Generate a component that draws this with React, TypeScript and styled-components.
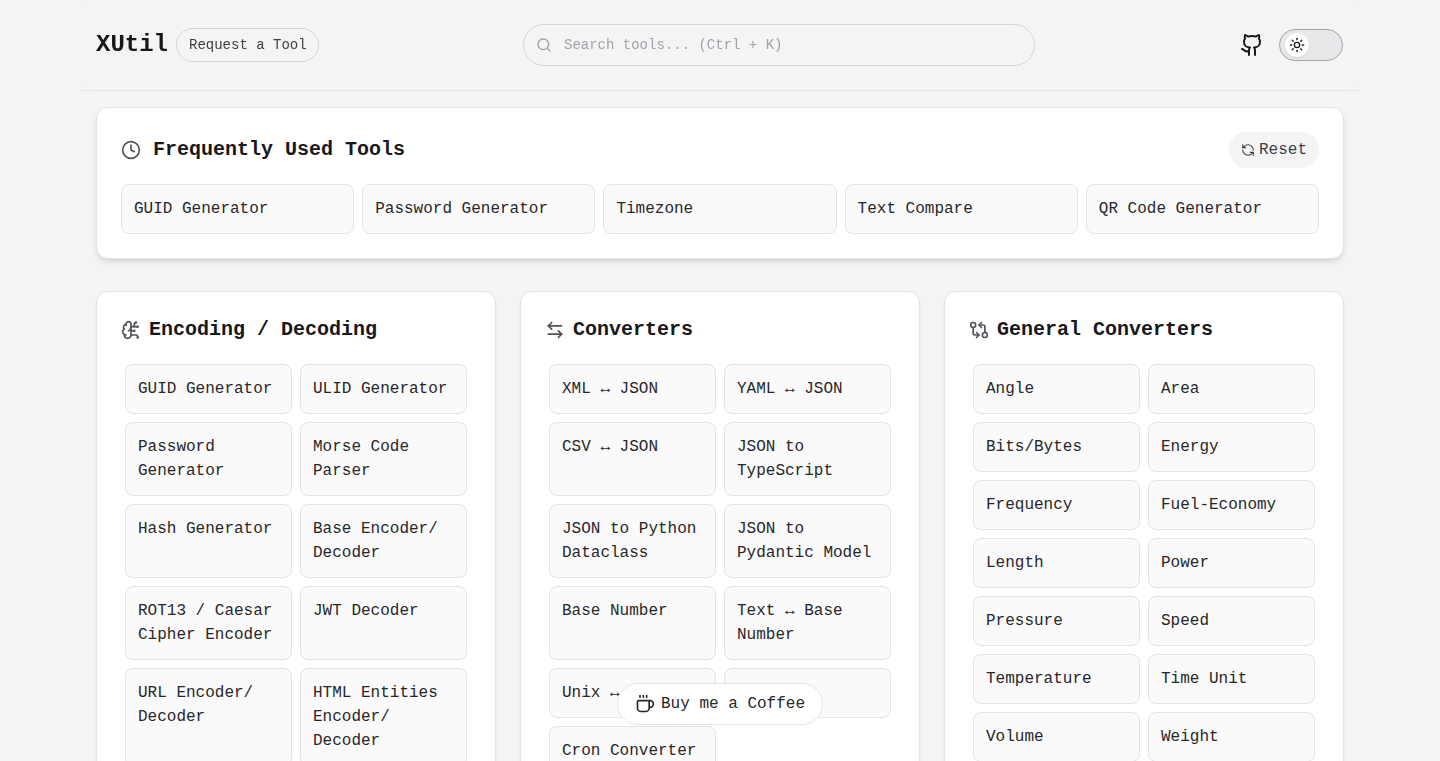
import React from "react";
import styled, { createGlobalStyle } from "styled-components";
import { ArrowLeftRight, BrainCircuit, Clock, Coffee, GitCompareArrows, RefreshCcw, Search, Sun } from "lucide-react";

const Global = createGlobalStyle`
  * { box-sizing: border-box; }
  html, body { margin: 0; padding: 0; height: 100%; overflow: hidden; background: #f4f4f4; }
  body { font-family: "Liberation Mono", monospace; color: #18181b; }
`;

const Page = styled.div`
  width: 1280px;
  margin: 0 auto;
`;

const Header = styled.header`
  height: 91px;
  padding: 0 16px;
  display: flex;
  align-items: center;
  justify-content: space-between;
  border-bottom: 1px solid #e4e4e7;
  backdrop-filter: blur(8px);
`;

const Brand = styled.div`
  display: flex;
  align-items: center;
  gap: 8px;
`;

const Logo = styled.span`
  font-size: 24px;
  font-weight: 700;
  line-height: 32px;
  color: #18181b;
`;

const RequestLink = styled.a`
  width: 143px;
  height: 34px;
  padding: 0 0 0 12px;
  display: flex;
  align-items: center;
  font-size: 14px;
  color: #3f3f46;
  border: 1px solid #d4d4d8;
  border-radius: 17px;
`;

const SearchBox = styled.div`
  width: 512px;
  height: 42px;
  padding: 0 12px;
  display: flex;
  align-items: center;
  gap: 12px;
  font-size: 14px;
  color: #a1a1aa;
  border: 1px solid #d4d4d8;
  border-radius: 21px;
`;

const Actions = styled.div`
  display: flex;
  align-items: center;
  gap: 15px;
  padding: 0 1px;
`;

const Toggle = styled.div`
  width: 64px;
  height: 32px;
  padding-left: 5px;
  display: flex;
  align-items: center;
  background: #e8e8ea;
  border: 1px solid #a1a1aa;
  border-radius: 16px;
`;

const Thumb = styled.div`
  width: 24px;
  height: 24px;
  display: flex;
  align-items: center;
  justify-content: center;
  background: #fff;
  border-radius: 50%;
  box-shadow: 0 1px 2px rgba(0, 0, 0, 0.1);
  color: #18181b;
`;

const Main = styled.main`
  padding: 16px 16px 0;
  display: flex;
  flex-direction: column;
  gap: 32px;
`;

const Card = styled.section<{ $raised?: boolean }>`
  padding: 24px;
  background: #fff;
  border: 1px solid #e4e4e7;
  border-radius: 12px;
  box-shadow: ${(p) =>
    p.$raised
      ? "0 4px 6px -1px rgba(0, 0, 0, 0.1), 0 2px 4px -2px rgba(0, 0, 0, 0.1)"
      : "0 1px 3px rgba(0, 0, 0, 0.05)"};
`;

const CardHead = styled.div`
  display: flex;
  align-items: center;
  justify-content: space-between;
  margin-bottom: 16px;
`;

const Title = styled.h2<{ $gap: number }>`
  margin: 0;
  display: flex;
  align-items: center;
  gap: ${(p) => p.$gap}px;
  font-size: 20px;
  line-height: 28px;
  font-weight: 700;
  color: #18181b;
  svg { color: #52525b; flex: none; }
`;

const ResetButton = styled.button`
  height: 36px;
  padding: 0 12px;
  display: flex;
  align-items: center;
  gap: 4px;
  font-family: inherit;
  font-size: 16px;
  color: #3f3f46;
  background: #f4f4f5;
  border: none;
  border-radius: 18px;
`;

const FrequentGrid = styled.div`
  display: grid;
  grid-template-columns: repeat(5, minmax(0, 1fr));
  gap: 8px;
`;

const Columns = styled.div`
  display: grid;
  grid-template-columns: repeat(3, 400px);
  gap: 24px;
  align-items: start;
`;

const ToolGrid = styled.div`
  padding: 4px;
  display: grid;
  grid-template-columns: repeat(2, 167px);
  gap: 8px;
`;

const Tool = styled.a`
  padding: 12px;
  font-size: 16px;
  line-height: 24px;
  color: #27272a;
  background: #fafafa;
  border: 1px solid #e4e4e7;
  border-radius: 8px;
`;

const CoffeeButton = styled.a`
  position: fixed;
  left: 617px;
  top: 683px;
  width: 206px;
  height: 42px;
  padding-left: 17px;
  display: flex;
  align-items: center;
  gap: 6px;
  font-size: 16px;
  color: #27272a;
  background: #fff;
  border: 1px solid #e4e4e7;
  border-radius: 21px;
  backdrop-filter: blur(8px);
`;

const frequent = ["GUID Generator", "Password Generator", "Timezone", "Text Compare", "QR Code Generator"];

const groups = [
  {
    title: "Encoding / Decoding",
    icon: <BrainCircuit size={20} />,
    tools: ["GUID Generator", "ULID Generator", "Password Generator", "Morse Code Parser", "Hash Generator", "Base Encoder/\u200BDecoder", "ROT13 / Caesar Cipher Encoder", "JWT Decoder", "URL Encoder/\u200BDecoder", "HTML Entities Encoder/\u200BDecoder"],
  },
  {
    title: "Converters",
    icon: <ArrowLeftRight size={20} />,
    tools: ["XML ↔ JSON", "YAML ↔ JSON", "CSV ↔ JSON", "JSON to TypeScript", "JSON to Python Dataclass", "JSON to Pydantic Model", "Base Number", "Text ↔ Base Number", "Unix ↔ Date", "Timezone", "Cron Converter"],
  },
  {
    title: "General Converters",
    icon: <GitCompareArrows size={20} />,
    tools: ["Angle", "Area", "Bits/Bytes", "Energy", "Frequency", "Fuel-Economy", "Length", "Power", "Pressure", "Speed", "Temperature", "Time Unit", "Volume", "Weight"],
  },
];

const GithubMark = () => (
  <svg width="24" height="24" viewBox="0 0 24 24" fill="none" stroke="#18181b" strokeWidth="2" strokeLinecap="round" strokeLinejoin="round">
    <path d="M15 22v-4a4.8 4.8 0 0 0-1-3.5c3 0 6-2 6-5.5.08-1.25-.27-2.48-1-3.5.28-1.15.28-2.35 0-3.5 0 0-1 0-3 1.5-2.64-.5-5.36-.5-8 0C6 2 5 2 5 2c-.3 1.15-.3 2.35 0 3.5A5.403 5.403 0 0 0 4 9c0 3.5 3 5.5 6 5.5-.39.49-.68 1.05-.85 1.65-.17.6-.22 1.23-.15 1.85v4" />
    <path d="M9 18c-4.51 2-5-2-7-2" />
  </svg>
);

export default function App() {
  return (
    <Page>
      <Global />
      <Header>
        <Brand>
          <Logo>XUtil</Logo>
          <RequestLink>Request a Tool</RequestLink>
        </Brand>
        <SearchBox>
          <Search size={16} />
          Search tools... (Ctrl + K)
        </SearchBox>
        <Actions>
          <GithubMark />
          <Toggle>
            <Thumb>
              <Sun size={16} />
            </Thumb>
          </Toggle>
        </Actions>
      </Header>
      <Main>
        <Card $raised>
          <CardHead>
            <Title $gap={12}>
              <Clock size={20} />
              Frequently Used Tools
            </Title>
            <ResetButton>
              <RefreshCcw size={14} />
              Reset
            </ResetButton>
          </CardHead>
          <FrequentGrid>
            {frequent.map((t) => (
              <Tool key={t}>{t}</Tool>
            ))}
          </FrequentGrid>
        </Card>
        <Columns>
          {groups.map((g) => (
            <Card key={g.title}>
              <CardHead>
                <Title $gap={8}>
                  {g.icon}
                  {g.title}
                </Title>
              </CardHead>
              <ToolGrid>
                {g.tools.map((t) => (
                  <Tool key={t}>{t}</Tool>
                ))}
              </ToolGrid>
            </Card>
          ))}
        </Columns>
      </Main>
      <CoffeeButton>
        <Coffee size={20} />
        Buy me a Coffee
      </CoffeeButton>
    </Page>
  );
}
